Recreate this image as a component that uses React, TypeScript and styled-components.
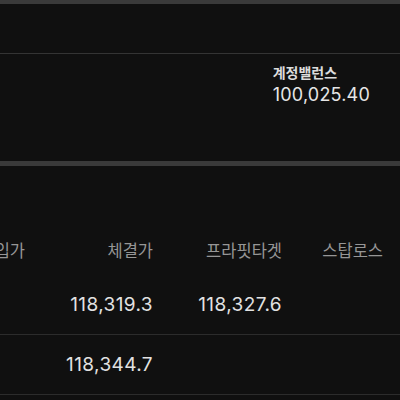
import React, { useLayoutEffect, useRef } from 'react';
import styled, { createGlobalStyle } from 'styled-components';

const GlobalStyle = createGlobalStyle`
  html, body {
    margin: 0;
    padding: 0;
    background: #101010;
  }
  body {
    font-family: Inter, 'Noto Sans CJK KR', sans-serif;
    color: #e4e4e4;
  }
`;

const Page = styled.div`
  width: 400px;
  height: 400px;
  overflow: hidden;
  display: flex;
  flex-direction: column;
  background: #101010;
  border-top: 4px solid #3a3a3a;
  box-sizing: border-box;
`;

const TopBar = styled.div`
  height: 49px;
  border-bottom: 1px solid #343434;
`;

const BalancePanel = styled.div`
  height: 112px;
  display: flex;
  justify-content: flex-end;
  padding: 9px 30px 0 0;
  box-sizing: border-box;
  border-bottom: 5px solid #3a3a3a;
`;

const Balance = styled.div`
  display: flex;
  flex-direction: column;
  gap: 3px;
  & > .label {
    font-family: 'Noto Sans CJK KR', sans-serif;
    font-size: 14px;
    font-weight: 700;
    line-height: 18px;
    color: #dcdcdc;
  }
  & > .value {
    font-size: 18px;
    line-height: 22px;
    letter-spacing: 0.2px;
    color: #e6e6e6;
  }
`;

const TableScroll = styled.div`
  flex: 1;
  overflow-x: auto;
  overflow-y: hidden;
  padding-top: 59px;
  scrollbar-width: none;
  &::-webkit-scrollbar {
    display: none;
  }
`;

const Table = styled.div`
  width: max-content;
`;

const Row = styled.div<{ $header?: boolean }>`
  display: grid;
  grid-template-columns: 128px 128px 129px 101px;
  align-items: center;
  padding-right: 17px;
  height: ${(p) => (p.$header ? '50px' : '59px')};
  border-bottom: ${(p) => (p.$header ? 'none' : '1px solid #2c2c2c')};
`;

const Cell = styled.div<{ $header?: boolean }>`
  text-align: right;
  white-space: nowrap;
  font-family: ${(p) =>
    p.$header ? "'Noto Sans CJK KR', sans-serif" : "Inter, 'Noto Sans CJK KR', sans-serif"};
  font-size: ${(p) => (p.$header ? '16.5px' : '19px')};
  letter-spacing: ${(p) => (p.$header ? '0' : '0.4px')};
  color: ${(p) => (p.$header ? '#969696' : '#e2e2e2')};
`;

const columns = ['진입가', '체결가', '프라핏타겟', '스탑로스'];

const rows = [
  ['', '118,319.3', '118,327.6', ''],
  ['', '118,344.7', '', ''],
];

export default function App() {
  const scrollRef = useRef<HTMLDivElement>(null);

  useLayoutEffect(() => {
    if (scrollRef.current) scrollRef.current.scrollLeft = 103;
  }, []);

  return (
    <>
      <GlobalStyle />
      <Page>
        <TopBar />
        <BalancePanel>
          <Balance>
            <div className="label">계정밸런스</div>
            <div className="value">100,025.40</div>
          </Balance>
        </BalancePanel>
        <TableScroll ref={scrollRef}>
          <Table>
            <Row $header>
              {columns.map((c) => (
                <Cell $header key={c}>
                  {c}
                </Cell>
              ))}
            </Row>
            {rows.map((r, i) => (
              <Row key={i}>
                {r.map((v, j) => (
                  <Cell key={j}>{v}</Cell>
                ))}
              </Row>
            ))}
          </Table>
        </TableScroll>
      </Page>
    </>
  );
}
